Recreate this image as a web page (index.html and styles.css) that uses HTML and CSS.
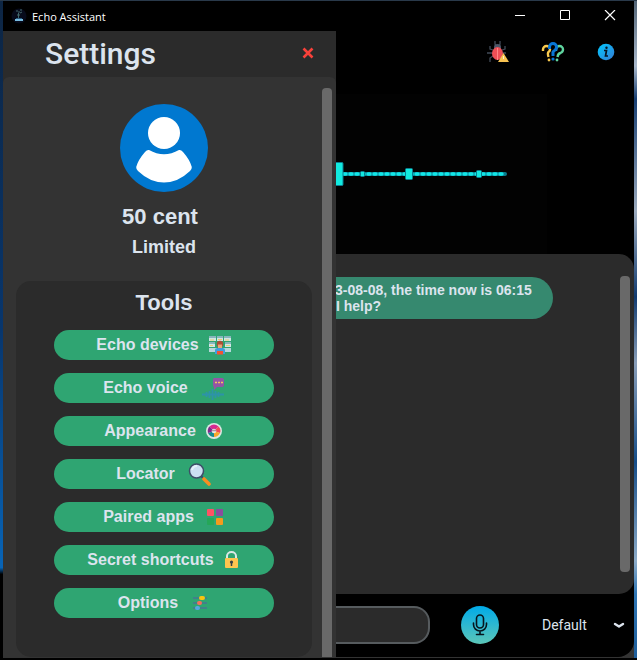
FILE: index.html
```html
<!DOCTYPE html>
<html lang="en">
<head>
<meta charset="utf-8">
<title>Echo Assistant</title>
<link rel="stylesheet" href="styles.css">
</head>
<body>
<div class="window">
  <header class="titlebar">
    <svg class="app-icon" width="16" height="16" viewBox="0 0 16 16" aria-hidden="true">
      <circle cx="8" cy="8" r="7.5" fill="#070b1b"/>
      <path d="M5 3h2M9 2h2M7 4h2M7.5 5v5M6 7h3M9 5l2-1" stroke="#43686d" fill="none"/>
      <path d="M4 11h8v2H4z" fill="#77bce0"/><path d="M5 10.500h6" stroke="#275a80"/>
    </svg>
    <h1 class="app-name">Echo Assistant</h1>
    <div class="window-controls">
      <button class="window-button" aria-label="Minimize"><svg width="12" height="12" viewBox="0 0 12 12"><path d="M1 5.500h10" stroke="#fff"/></svg></button>
      <button class="window-button" aria-label="Maximize"><svg width="12" height="12" viewBox="0 0 12 12"><path d="M1.500 .5h9v9h-9z" stroke="#fff" fill="none"/></svg></button>
      <button class="window-button" aria-label="Close"><svg width="12" height="12" viewBox="0 0 12 12"><path d="M1 0l10 10M11 0L1 10" stroke="#fff" stroke-width="1.200"/></svg></button>
    </div>
  </header>
  <div class="content">
    <aside class="drawer">
      <div class="drawer-head">
        <h2 class="drawer-title">Settings</h2>
        <button class="drawer-close" aria-label="Close settings"><svg width="12" height="12" viewBox="0 0 12 12"><path d="M1.500 1.500l9 9M10.500 1.500l-9 9" stroke="#f9413a" stroke-width="2.600"/></svg></button>
      </div>
      <div class="drawer-body">
        <div class="drawer-content">
          <section class="profile">
            <svg width="88" height="88" viewBox="0 0 88 88" aria-hidden="true">
              <circle cx="44" cy="44" r="44" fill="#0078d0"/>
              <circle cx="44" cy="29" r="16" fill="#fff"/>
              <path d="M29 46Q44 54.500 59 46Q61 45.500 63 48Q70 56 71.800 63Q72 65 70 67Q58 78.500 44 78.500T18 67Q16 65 16.200 63Q18 56 25 48Q27 45.500 29 46Z" fill="#fff"/>
            </svg>
            <p class="user-name">50 cent</p>
            <p class="user-plan">Limited</p>
          </section>
          <section class="tools">
            <h3 class="tools-title">Tools</h3>
            <button class="tool">Echo devices
              <svg width="23" height="24" viewBox="0 0 23 24" aria-hidden="true">
                <path d="M0 3h7v5H0zM8 3h6v5H8zM15 3h7v5h-7zM0 9h6v5H0zM16 9h6v5h-6z" fill="#cfe6e4"/>
                <path d="M0 4h7M8 4h6M15 4h7M0 10h6M16 10h6" stroke="#6fa5ae" stroke-width="1.500"/>
                <path d="M1 7h4M9 6.500h4M16 7h4M1 12.500h3M17 12.500h4" stroke="#e7cf73"/>
                <path d="M0 15h8v4H0zM14 15h8v4h-8z" fill="#b5d6da"/>
                <circle cx="11" cy="11" r="3.200" fill="#ad4e37"/><path d="M9 11.500h4V15H9z" fill="#e7a378"/>
                <path d="M6 21v-4q0-2 3-2h4q3 0 3 2v4z" fill="#3f9fdf"/><path d="M8 18h6v3.500H8z" fill="#f15332"/>
              </svg>
            </button>
            <button class="tool">Echo voice
              <svg width="27" height="24" viewBox="0 0 27 24" aria-hidden="true">
                <path d="M16 2h8q2 0 2 2v5q0 2-2 2h-5l-3 3v-3q-1 0-1-2V4q0-2 1-2z" fill="#9455a5"/>
                <path d="M17 6.500h2M20 6.500h2M23 6.500h2" stroke="#f5c75c" stroke-width="1.500"/>
                <path d="M4 18.500h22M8.500 16v5M11.500 15v7M14.500 13v11M17.500 15v7M20.500 16v5" stroke="#2d93a8" stroke-width="1.800"/>
              </svg>
            </button>
            <button class="tool">Appearance
              <svg width="18" height="24" viewBox="0 0 18 24" aria-hidden="true">
                <circle cx="8" cy="12" r="8" fill="#dce8e4"/>
                <path d="M8 12L3.500 7.500q4.500-4 9 0z" fill="#d9298f"/><path d="M8 12l4.500-4.500q3 3 1.500 6.500z" fill="#f24a55"/>
                <path d="M8 12l6 2q-2 4-6 4z" fill="#f8a82b"/><path d="M8 12v6q-4 0-6-4z" fill="#168b91"/><path d="M8 12l-6 2Q1 10 3.500 7.500z" fill="#81278d"/>
                <circle cx="8" cy="12" r="2.300" fill="#e8e8e6"/><path d="M6.500 11.500h1M8.500 11.500h1" stroke="#77435d" stroke-width="1.500"/>
              </svg>
            </button>
            <button class="tool">Locator
              <svg width="27" height="24" viewBox="0 0 27 24" aria-hidden="true">
                <path d="M16 14l4 4" stroke="#34496b" stroke-width="2"/><path d="M19 17l5 5" stroke="#f78e20" stroke-width="3.600" stroke-linecap="round"/>
                <circle cx="11.500" cy="9" r="7" fill="#cbdff2" stroke="#3e4d68" stroke-width="1.500"/><path d="M7 8q1-4 5-4" stroke="#e5f0fa" stroke-width="2" fill="none"/>
              </svg>
            </button>
            <button class="tool">Paired apps
              <svg width="21" height="24" viewBox="0 0 21 24" aria-hidden="true">
                <rect x="3" y="4" width="7" height="7" rx="1" fill="#ff5364"/><rect x="12" y="4" width="7" height="7" rx="1" fill="#8a4d9e"/>
                <rect x="3" y="13" width="7" height="7" rx="1" fill="#25a758"/><rect x="12" y="13" width="7" height="7" rx="1" fill="#f59b1c"/>
              </svg>
            </button>
            <button class="tool">Secret shortcuts
              <svg width="17" height="24" viewBox="0 0 17 24" aria-hidden="true">
                <path d="M3 11V8a4.500 4 0 019 0V11" stroke="#dbe8e6" stroke-width="2" fill="none"/>
                <rect x="1" y="10" width="13" height="10" rx="1" fill="#ffc54f"/><circle cx="7.500" cy="14" r="1.600" fill="#394044"/><path d="M7.500 14v4" stroke="#394044" stroke-width="1.500"/>
              </svg>
            </button>
            <button class="tool">Options
              <svg width="22" height="24" viewBox="0 0 22 24" aria-hidden="true">
                <path d="M5 7h14M5 12h14M5 17h14" stroke="#41818a" stroke-width="2"/>
                <rect x="11" y="5" width="6" height="4" rx="2" fill="#f7c510"/><rect x="9" y="10" width="5" height="4" rx="2" fill="#f4705b"/><rect x="7" y="15" width="5" height="4" rx="2" fill="#53a9df"/>
              </svg>
            </button>
          </section>
        </div>
        <div class="scrollbar drawer-scrollbar"></div>
      </div>
    </aside>
    <main class="assistant">
      <nav class="toolbar">
        <button class="icon-button" aria-label="Report a bug"><svg width="22" height="24" viewBox="0 0 22 24">
          <path d="M8 1v3l1 2M13 1v3l-1 2M6 10L3 9V6M15 10l3-1V6M6 13H0M15 13h4M6 16l-3 2v4" stroke="#424b58" stroke-width="1.300" fill="none"/>
          <path d="M7 9V7q0-3 3.500-3T14 7v2z" fill="#4c5668"/><ellipse cx="10.500" cy="13.500" rx="5.500" ry="6.500" fill="#ed4f56"/><path d="M10.500 8v12" stroke="#ff8585"/>
          <path d="M16.500 13L22 22H11z" fill="#f8c351"/><path d="M16.500 16v3" stroke="#fff1cf"/>
        </svg></button>
        <button class="icon-button" aria-label="Help"><svg width="24" height="24" viewBox="0 0 24 24">
          <g fill="none"><path d="M2 11V9.500a3.500 3.500 0 017 0Q9 11 7.500 12Q6.300 13 7.500 17" stroke="#f8c94e" stroke-width="2.400"/>
          <path d="M15 11V9.500a3.500 3.500 0 017 0Q22 12 19.500 13Q17 13.500 16.500 17" stroke="#5fd49f" stroke-width="2.400"/>
          <path d="M8.500 9V7a3.500 3.500 0 017 0q0 2.500-2 3.500T12 14v2" stroke="#0876d6" stroke-width="3"/></g>
          <circle cx="8" cy="20" r="1.400" fill="#f8c94e"/><circle cx="16" cy="20" r="1.400" fill="#5fd49f"/><circle cx="12" cy="19" r="1.600" fill="#0876d6"/>
        </svg></button>
        <button class="icon-button" aria-label="Information"><svg width="18" height="24" viewBox="0 0 18 24">
          <defs><linearGradient id="info" x1="0" y1="0" x2="1" y2="1"><stop stop-color="#00c9ff"/><stop offset="1" stop-color="#367bd3"/></linearGradient></defs>
          <circle cx="9" cy="12" r="8.300" fill="url(#info)"/><circle cx="9.500" cy="7.800" r="1.200" fill="#071523"/><path d="M7 10.500h2.500L8.500 16H11" stroke="#071523" stroke-width="1.700" fill="none"/>
        </svg></button>
      </nav>
      <div class="wave">
        <svg width="172" height="40" viewBox="0 0 172 40" aria-hidden="true">
          <path d="M0 20h169" stroke="#087c8c" stroke-width="4" stroke-linecap="round"/>
          <path d="M8 20h162" stroke="#12e6e6" stroke-width="3.400" stroke-linecap="round" stroke-dasharray="2 4"/>
          <g fill="#12eadf" stroke="#087e91"><rect x="-3" y="8.500" width="10" height="23" rx="1"/><rect x="24.500" y="17.500" width="4" height="5" rx="1"/><rect x="69.500" y="14.500" width="7" height="11" rx="1"/><rect x="140.500" y="16.500" width="5" height="7" rx="1"/></g>
        </svg>
      </div>
      <section class="chat">
        <p class="bubble">3-08-08, the time now is 06:15<br>I help?</p>
        <div class="scrollbar"></div>
      </section>
      <form class="composer">
        <input class="message" type="text" aria-label="Message">
        <button class="mic" type="button" aria-label="Speak"><svg width="16" height="22" viewBox="0 0 16 22">
          <g fill="none" stroke="#06151d" stroke-width="1.600" stroke-linecap="round"><rect x="4.500" y="1" width="7" height="13" rx="3.500"/><path d="M1.500 9v1.500a6.500 6.500 0 0013 0V9M8 17v3M4.500 20.500h7"/></g>
        </svg></button>
        <label class="mode"><select class="mode-select" aria-label="Mode"><option>Default</option></select>
          <svg width="12" height="8" viewBox="0 0 12 8" aria-hidden="true"><path d="M2 3l4 2.500L10 3" stroke="#dce4ee" stroke-width="2.400" stroke-linecap="round" stroke-linejoin="round" fill="none"/></svg>
        </label>
      </form>
    </main>
  </div>
</div>
</body>
</html>
```
FILE: styles.css
```css
* { box-sizing: border-box; }

body {
  margin: 0;
  min-height: 100vh;
  display: flex;
  padding: 0 3px 1px;
  border-top: 1px solid #29394a;
  border-bottom: 2px solid #000;
  background:
    linear-gradient(#0d2543, #08366d 50%, #0864b6 86%, #000 87%) left / 3px 100% no-repeat,
    linear-gradient(#526476, #a9b8cb 10%, #173e72 15%, #9cabbe 32%, #123b70 45%, #899eb9 55%, #164d88 70%, #8dacc9 85%, #2f76b5 90%, #1d5c99) right / 3px 100% no-repeat,
    #333;
  color: #dce4ee;
  font-family: "Liberation Sans", sans-serif;
}

h1, h2, h3, p { margin: 0; }

button {
  border: 0;
  padding: 0;
  background: none;
  color: inherit;
  font: inherit;
}

svg { display: block; flex: none; }

.window {
  flex: 1;
  min-width: 0;
  display: flex;
  flex-direction: column;
  background: #000;
  border-bottom-right-radius: 16px;
}

.titlebar {
  display: flex;
  align-items: center;
  height: 30px;
  padding: 0 2px 0 8px;
}

.app-name {
  flex: 1;
  padding-left: 5px;
  color: #fff;
  font: 11px "Open Sans", sans-serif;
}

.window-controls { display: flex; }

.window-button {
  width: 45px;
  height: 28px;
  display: grid;
  place-items: center;
}

.content {
  flex: 1;
  display: flex;
}

.drawer {
  flex: none;
  width: 333px;
  display: flex;
  flex-direction: column;
  background: #2b2b2b;
}

.drawer-head {
  display: flex;
  align-items: center;
  justify-content: space-between;
  height: 46px;
  padding: 0 22px 2px 42px;
}

.drawer-title { font: 500 30px Roboto, sans-serif; }

.drawer-body {
  flex: 1;
  display: flex;
  gap: 10px;
  padding: 11px 4px 0 13px;
  border-radius: 6px 6px 0 0;
  background: #333;
}

.drawer-content {
  flex: 1;
  display: flex;
  flex-direction: column;
}

.scrollbar {
  width: 10px;
  border-radius: 4px;
  background: #696969;
}

.drawer-scrollbar { border-radius: 4px 4px 0 0; }

.profile {
  display: flex;
  flex-direction: column;
  align-items: center;
  padding: 16px 0 22px;
}

.user-name {
  margin-top: 12px;
  padding-right: 8px;
  font-size: 22px;
  font-weight: bold;
  line-height: 26px;
}

.user-plan {
  margin-top: 6px;
  font-size: 18px;
  font-weight: bold;
  line-height: 23px;
}

.tools {
  flex: 1;
  display: flex;
  flex-direction: column;
  gap: 13px;
  padding: 8px 38px 39px;
  border-radius: 15px;
  background: #2b2b2b;
}

.tools-title {
  font-size: 22px;
  line-height: 28px;
  text-align: center;
}

.tool {
  height: 30px;
  display: flex;
  align-items: center;
  justify-content: center;
  gap: 10px;
  border-radius: 15px;
  background: #2fa572;
  font-size: 16px;
  font-weight: bold;
}

.assistant {
  flex: 1;
  min-width: 0;
  display: flex;
  flex-direction: column;
}

.toolbar {
  display: flex;
  align-items: center;
  justify-content: flex-end;
  gap: 32px;
  height: 63px;
  padding: 0 19px 22px 0;
}

.wave {
  height: 160px;
  display: flex;
  align-items: center;
  margin-right: 87px;
  overflow: hidden;
  background: #020202;
}

.chat {
  flex: 1;
  display: flex;
  justify-content: space-between;
  padding: 22px 4px 22px 0;
  border-radius: 0 15px 15px 0;
  background: #2b2b2b;
}

.bubble {
  align-self: flex-start;
  width: 217px;
  margin-top: 1px;
  padding: 5px 0;
  text-indent: -1px;
  overflow: hidden;
  border-radius: 0 21px 21px 0;
  background: #36896f;
  font-size: 14px;
  font-weight: bold;
  line-height: 16px;
  white-space: nowrap;
}

.composer {
  display: flex;
  align-items: center;
  height: 63px;
  padding-bottom: 2px;
}

.message {
  flex: 1;
  width: 0;
  min-width: 0;
  height: 38px;
  border: 2px solid #565b5e;
  border-left: 0;
  border-radius: 0 16px 16px 0;
  background: #2b2b2b;
  color: inherit;
}

.mic {
  width: 38px;
  height: 38px;
  display: grid;
  place-items: center;
  margin: 0 43px 0 31px;
  border-radius: 50%;
  background: linear-gradient(#00aae8, #5cc6b8);
}

.mode {
  display: flex;
  align-items: center;
  padding-right: 9px;
}

.mode-select {
  width: 71px;
  padding: 0;
  appearance: none;
  border: 0;
  background: #000;
  color: inherit;
  font: 14px Roboto, sans-serif;
}
```
